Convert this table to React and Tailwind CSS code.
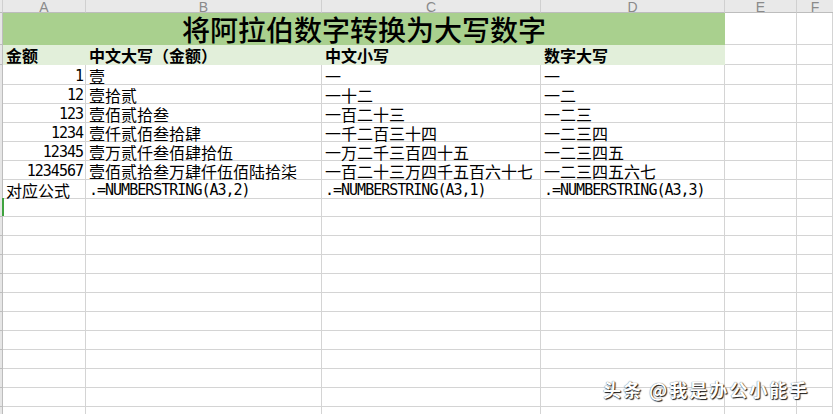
import React from "react";

const GRID = "grid grid-cols-[3px_83px_236px_219px_184px_72px_1fr]";
const CJK = "font-['Noto_Sans_CJK_SC',sans-serif]";
const MONO = "font-['DejaVu_Sans_Mono',monospace] text-[15px] tracking-[-1px] leading-[16px]";
const cell = "border-r border-b border-[#d4d4d4] whitespace-nowrap overflow-visible";
const stripe = "bg-[#e6e6e6] border-r border-b border-[#bdbdbd]";

const rows = [
  ["1", "壹", "一", "一"],
  ["12", "壹拾贰", "一十二", "一二"],
  ["123", "壹佰贰拾叁", "一百二十三", "一二三"],
  ["1234", "壹仟贰佰叁拾肆", "一千二百三十四", "一二三四"],
  ["12345", "壹万贰仟叁佰肆拾伍", "一万二千三百四十五", "一二三四五"],
  ["1234567", "壹佰贰拾叁万肆仟伍佰陆拾柒", "一百二十三万四千五百六十七", "一二三四五六七"],
];

function ColHead({ label, last }) {
  return (
    <div className={`h-[13px] flex justify-center items-end overflow-hidden border-b border-[#bdbdbd] ${last ? "" : "border-r border-r-[#d0d0d0]"}`}>
      <span className="font-['Liberation_Sans',sans-serif] text-[14px] leading-[12px] text-[#8a8a8a] -mb-[1px]">{label}</span>
    </div>
  );
}

function DataRow({ r }) {
  return (
    <div className={`${GRID} h-[19px]`}>
      <div className={stripe} />
      <div className={`${cell} text-right pr-[2px] pt-[3px] text-black ${MONO}`}>{r[0]}</div>
      <div className={`${cell} pl-[3px] pt-[3px] ${CJK} text-[16px] leading-[16px] text-black`}>{r[1]}</div>
      <div className={`${cell} pl-[3px] pt-[3px] ${CJK} text-[16px] leading-[16px] text-black`}>{r[2]}</div>
      <div className={`${cell} pl-[3px] pt-[3px] ${CJK} text-[16px] leading-[16px] text-black`}>{r[3]}</div>
      <div className={cell} />
      <div className={cell} />
    </div>
  );
}

function EmptyRow({ marker }) {
  return (
    <div className={`${GRID} h-[19px]`}>
      <div className={`${stripe} relative`}>
        {marker && <div className="absolute left-[2px] top-0 bottom-0 w-[2px] bg-[#3fa33f]" />}
      </div>
      <div className={cell} />
      <div className={cell} />
      <div className={cell} />
      <div className={cell} />
      <div className={cell} />
      <div className={cell} />
    </div>
  );
}

export default function App() {
  return (
    <div className="relative w-[833px] h-[414px] overflow-hidden bg-white">
      {/* column header */}
      <div className={`${GRID} bg-[#e9e9e9]`}>
        <div className="h-[13px] bg-[#e9e9e9] border-b border-[#bdbdbd] border-r border-r-[#d0d0d0]" />
        <ColHead label="A" />
        <ColHead label="B" />
        <ColHead label="C" />
        <ColHead label="D" />
        <ColHead label="E" />
        <ColHead label="F" last />
      </div>

      {/* title row */}
      <div className={`${GRID} h-[32px]`}>
        <div className={stripe} />
        <div className={`col-span-4 bg-[#a9d08e] flex justify-center pt-[2px] ${CJK} text-[28px] leading-[28px] font-medium text-black whitespace-nowrap`}>
          将阿拉伯数字转换为大写数字
        </div>
        <div className={cell} />
        <div className={cell} />
      </div>

      {/* header row */}
      <div className={`${GRID} h-[20px]`}>
        <div className={stripe} />
        <div className={`bg-[#e2efda] pl-[3px] pt-[2px] ${CJK} text-[16px] leading-[16px] font-bold text-black whitespace-nowrap`}>金额</div>
        <div className={`bg-[#e2efda] pl-[3px] pt-[2px] ${CJK} text-[16px] leading-[16px] font-bold text-black whitespace-nowrap`}>中文大写（金额）</div>
        <div className={`bg-[#e2efda] pl-[3px] pt-[2px] ${CJK} text-[16px] leading-[16px] font-bold text-black whitespace-nowrap`}>中文小写</div>
        <div className={`bg-[#e2efda] pl-[3px] pt-[2px] ${CJK} text-[16px] leading-[16px] font-bold text-black whitespace-nowrap`}>数字大写</div>
        <div className={cell} />
        <div className={cell} />
      </div>

      {rows.map((r) => (
        <DataRow key={r[0]} r={r} />
      ))}

      {/* formula row */}
      <div className={`${GRID} h-[19px]`}>
        <div className={stripe} />
        <div className={`${cell} pl-[3px] pt-[3px] ${CJK} text-[16px] leading-[16px] text-black`}>对应公式</div>
        <div className={`${cell} pl-[3px] pt-[3px] text-black ${MONO}`}>.=NUMBERSTRING(A3,2)</div>
        <div className={`${cell} pl-[3px] pt-[3px] text-black ${MONO}`}>.=NUMBERSTRING(A3,1)</div>
        <div className={`${cell} pl-[3px] pt-[3px] text-black ${MONO}`}>.=NUMBERSTRING(A3,3)</div>
        <div className={cell} />
        <div className={cell} />
      </div>

      {Array.from({ length: 12 }).map((_, i) => (
        <EmptyRow key={i} marker={i === 0} />
      ))}

      {/* watermark */}
      <div className={`absolute left-[603px] top-[380px] ${CJK} text-[18px] leading-[18px] tracking-[2px] font-bold text-white whitespace-nowrap [text-shadow:1px_1px_1px_rgba(0,0,0,0.9),0_0_1px_rgba(0,0,0,0.7)]`}>
        头条 @我是办公小能手
      </div>
    </div>
  );
}
